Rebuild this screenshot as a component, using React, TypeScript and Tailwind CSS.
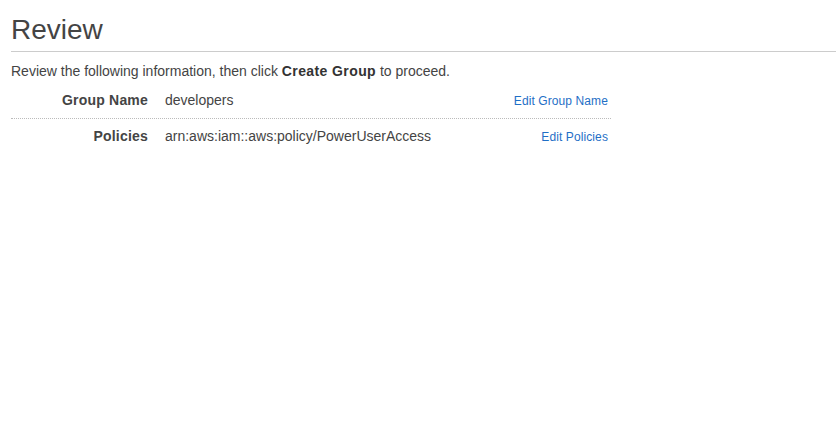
export default function App() {
  const rows = [
    { label: "Group Name", value: "developers", action: "Edit Group Name" },
    { label: "Policies", value: "arn:aws:iam::aws:policy/PowerUserAccess", action: "Edit Policies" },
  ];

  return (
    <div className="min-h-[432px] bg-white pl-[11px] text-[#444] font-['Liberation_Sans',Arial,sans-serif]">
      <h1 className="border-b border-[#ccc] pt-[14px] pb-[5px] text-[28px] leading-[32px] font-normal">
        Review
      </h1>
      <p className="mt-[9px] mb-[1px] text-[14px] leading-[20px]">
        Review the following information, then click{" "}
        <b className="font-bold tracking-[0.4px] text-[#333]">Create Group</b> to proceed.
      </p>
      <div className="w-[600px]">
        {rows.map((row, i) => (
          <div
            key={row.label}
            className={
              i === 0
                ? "flex items-baseline pt-[8px] pb-[7px] border-b border-dotted border-[#bbb]"
                : "flex items-baseline pt-[7px] pb-[8px]"
            }
          >
            <div className="w-[137px] shrink-0 text-right text-[14px] leading-[20px] font-bold tracking-[0.2px] text-[#444]">
              {row.label}
            </div>
            <div className="ml-[17px] flex-1 text-[14px] leading-[20px]">{row.value}</div>
            <a href="#" className="pr-[3px] text-[12px] leading-[20px] tracking-[0.1px] text-[#1f6fc6]">
              {row.action}
            </a>
          </div>
        ))}
      </div>
    </div>
  );
}
